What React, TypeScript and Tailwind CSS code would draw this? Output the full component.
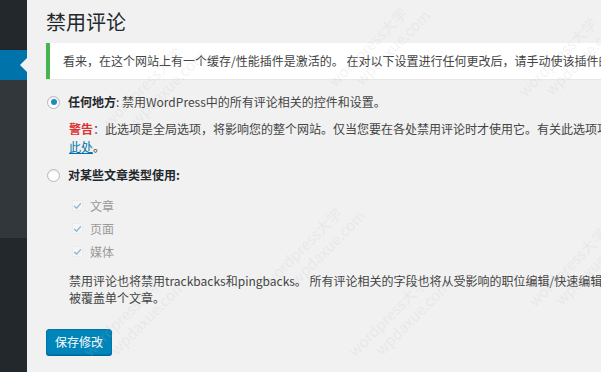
import React from 'react';

const cjk = { fontFamily: '"Noto Sans CJK SC", "Noto Sans", sans-serif' };

function Radio({ checked }: { checked?: boolean }) {
  return (
    <span className="flex h-[13px] w-[13px] shrink-0 items-center justify-center rounded-full border border-[#b4b9be] bg-white shadow-[inset_0_1px_2px_rgba(0,0,0,0.1)]">
      {checked && <span className="h-[6px] w-[6px] rounded-full bg-[#1e8cbe]" />}
    </span>
  );
}

function CheckRow({ label }: { label: string }) {
  return (
    <div className="flex h-[23px] items-center">
      <span className="ml-[26px] flex h-[11px] w-[11px] items-center justify-center border border-[#ececec] bg-[#f5f5f5]">
        <svg viewBox="0 0 12 12" className="h-[10px] w-[10px]">
          <path d="M2 6.3 L4.8 9 L10 2.8" fill="none" stroke="#8fb8d3" strokeWidth="1.8" strokeLinecap="round" strokeLinejoin="round" />
        </svg>
      </span>
      <span className="ml-[7px] text-[12px] text-[#9a9a9a]">{label}</span>
    </div>
  );
}

// faint site watermark, repeated over the page
const marks = [
  { x: 320, y: 30 },
  { x: 95, y: 70 },
  { x: 510, y: 40 },
  { x: 255, y: 230 },
  { x: 75, y: 300 },
  { x: 340, y: 300 },
  { x: 520, y: 250 },
];

export default function App() {
  return (
    <div className="relative flex h-[372px] w-[601px] overflow-hidden bg-[#f1f1f1]" style={cjk}>
      {/* admin sidebar */}
      <div className="flex w-[27px] shrink-0 flex-col bg-[#23282d]">
        <div className="h-[50px]" />
        <div className="relative h-[30px] bg-[#0073aa]">
          <span className="absolute right-0 top-[8px] h-0 w-0 border-y-[7px] border-r-[7px] border-y-transparent border-r-[#f1f1f1]" />
        </div>
        <div className="h-[158px] bg-[#32373c]" />
      </div>

      {/* content */}
      <div className="min-w-0 flex-1 pl-[19px] pt-[9px] text-[#444]">
        <h1 className="text-[20px] leading-[26px] text-[#23282d]">禁用评论</h1>

        <div className="mt-[8px] whitespace-nowrap border-l-4 border-[#46b450] bg-white py-[9px] pl-[13px] text-[12px] leading-[18px] shadow-[0_1px_1px_rgba(0,0,0,0.04)]">
          看来，在这个网站上有一个缓存/性能插件是激活的。 在对以下设置进行任何更改后，请手动使该插件的缓存无效。
        </div>

        <div className="mt-[14px] flex h-[18px] items-center whitespace-nowrap text-[12px]">
          <span className="ml-[1px]"><Radio checked /></span>
          <span className="ml-[8px] font-semibold text-[#23282d]">任何地方</span>
          <span>: 禁用WordPress中的所有评论相关的控件和设置。</span>
        </div>

        <div className="mt-[9px] pl-[23px] text-[12px] leading-[18px]">
          <div className="whitespace-nowrap">
            <span className="font-semibold text-[#dc3232]">警告</span>：此选项是全局选项，将影响您的整个网站。仅当您要在各处禁用评论时才使用它。有关此选项功能的更多信息，请参阅
          </div>
          <div>
            <span className="text-[#0073aa] underline">此处</span>。
          </div>
        </div>

        <div className="mt-[10px] flex h-[18px] items-center whitespace-nowrap text-[12px]">
          <span className="ml-[1px]"><Radio /></span>
          <span className="ml-[8px] font-semibold text-[#23282d]">对某些文章类型使用:</span>
        </div>

        <div className="mt-[10px]">
          <CheckRow label="文章" />
          <CheckRow label="页面" />
          <CheckRow label="媒体" />
        </div>

        <div className="mt-[9px] whitespace-nowrap pl-[23px] text-[12px] leading-[17px]">
          <div>禁用评论也将禁用trackbacks和pingbacks。 所有评论相关的字段也将从受影响的职位编辑/快速编辑画面隐藏。 这些设置不能</div>
          <div>被覆盖单个文章。</div>
        </div>

        <button className="mt-[23px] h-[26px] w-[66px] rounded-[3px] border border-[#0073aa] bg-[#0085ba] text-[12px] text-white shadow-[0_1px_0_#006799]">
          保存修改
        </button>
      </div>

      {marks.map((m, i) => (
        <div
          key={i}
          className="pointer-events-none absolute -rotate-45 whitespace-nowrap text-[15px] leading-[18px] text-[#bbbbbb] opacity-15"
          style={{ left: m.x, top: m.y }}
        >
          <div>wordpress大学</div>
          <div className="pl-[20px]">wpdaxue.com</div>
        </div>
      ))}
    </div>
  );
}
